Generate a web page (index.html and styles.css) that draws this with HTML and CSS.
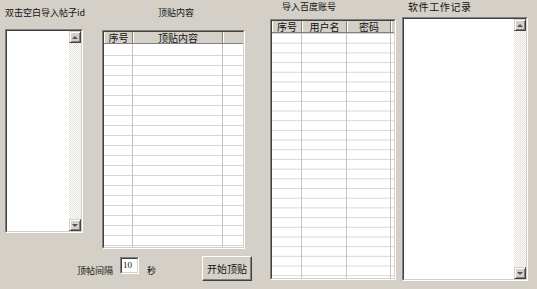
FILE: index.html
```html
<!DOCTYPE html>
<html lang="zh-CN">
<head>
  <meta charset="UTF-8" />
  <title>顶贴工具</title>
  <link rel="stylesheet" href="styles.css">
</head>
<body>

<div class="form">
  <div class="left">
    <div class="left-top">
      <div class="col-ids">
        <div class="cap cap-ids">双击空白导入帖子id</div>
        <div class="sunken ids-box">
          <div class="inner">
            <div class="list-area"></div>
            <div class="vscroll">
              <div class="sb-btn"><span class="arrow-up"></span></div>
              <div class="sb-track"></div>
              <div class="sb-btn"><span class="arrow-down"></span></div>
            </div>
          </div>
        </div>
      </div>

      <div class="col-posts">
        <div class="cap cap-posts">顶贴内容</div>
        <div class="sunken posts-grid">
          <div class="inner grid">
            <div class="grid-head">
              <div class="hc p-no">序号</div>
              <div class="hc p-text">顶贴内容</div>
              <div class="hc p-rest"></div>
            </div>
            <div class="grid-body posts-body">
              <div class="bc p-no"></div>
              <div class="bc p-text"></div>
              <div class="bc p-rest"></div>
            </div>
          </div>
        </div>
      </div>
    </div>

    <div class="controls">
      <span class="ctl-label">顶帖间隔</span>
      <div class="sunken interval"><div class="inner">10</div></div>
      <span class="ctl-unit">秒</span>
      <button class="btn-start">开始顶贴</button>
    </div>
  </div>

  <div class="col-accounts">
    <div class="cap cap-accounts">导入百度账号</div>
    <div class="sunken accounts-grid">
      <div class="inner grid">
        <div class="grid-head">
          <div class="hc a-no">序号</div>
          <div class="hc a-user">用户名</div>
          <div class="hc a-pass">密码</div>
          <div class="hc a-rest"></div>
        </div>
        <div class="grid-body accounts-body">
          <div class="bc a-no"></div>
          <div class="bc a-user"></div>
          <div class="bc a-pass"></div>
          <div class="bc a-rest"></div>
        </div>
      </div>
    </div>
  </div>

  <div class="col-log">
    <div class="cap cap-log">软件工作记录</div>
    <div class="sunken log-box">
      <div class="inner">
        <div class="list-area"></div>
        <div class="vscroll">
          <div class="sb-btn"><span class="arrow-up"></span></div>
          <div class="sb-track"></div>
          <div class="sb-btn"><span class="arrow-down"></span></div>
        </div>
      </div>
    </div>
  </div>
</div>

</body>
</html>
```

FILE: styles.css
```css
body {
  margin: 0;
  background: #d4d0c8;
  font-family: "Noto Sans CJK SC", "DejaVu Sans", sans-serif;
  font-size: 9px;
  color: #111;
}

.form {
  display: flex;
  align-items: flex-start;
  padding-left: 5px;
}

/* ---- captions ---- */
.cap {
  box-sizing: border-box;
  line-height: 12px;
  white-space: nowrap;
}

.cap-ids {
  height: 29px;
  padding-top: 7px;
}

.cap-posts {
  height: 30px;
  padding-top: 7px;
  text-align: center;
  padding-left: 5px;
}

.cap-accounts {
  height: 19px;
  padding-top: 1px;
  padding-left: 12px;
}

.cap-log {
  height: 17px;
  padding-top: 1px;
  padding-left: 6px;
  font-size: 10px;
  line-height: 11px;
  letter-spacing: 0.6px;
}

/* ---- sunken frames ---- */
.sunken {
  box-sizing: border-box;
  border: 1px solid;
  border-color: #808080 #fff #fff #808080;
}

.sunken > .inner {
  box-sizing: border-box;
  height: 100%;
  border: 1px solid;
  border-color: #404040 #d4d0c8 #d4d0c8 #404040;
  background: #fff;
}

/* ---- list boxes with scrollbar ---- */
.ids-box,
.log-box {
  display: flex;
}

.ids-box .inner,
.log-box .inner {
  display: flex;
  width: 100%;
}

.list-area {
  flex: 1;
}

.vscroll {
  width: 12px;
  display: flex;
  flex-direction: column;
}

.sb-track {
  flex: 1;
  background: repeating-conic-gradient(#fff 0 25%, #e2dfd8 0 50%) 0 0 / 2px 2px;
}

.sb-btn {
  box-sizing: border-box;
  height: 12px;
  background: #d4d0c8;
  border: 1px solid;
  border-color: #d4d0c8 #404040 #404040 #d4d0c8;
  box-shadow: inset 1px 1px 0 #fff, inset -1px -1px 0 #808080;
  display: flex;
  align-items: center;
  justify-content: center;
}

.arrow-up {
  width: 0;
  height: 0;
  border-left: 3px solid transparent;
  border-right: 3px solid transparent;
  border-bottom: 3px solid #555;
}

.arrow-down {
  width: 0;
  height: 0;
  border-left: 3px solid transparent;
  border-right: 3px solid transparent;
  border-top: 3px solid #555;
}

/* ---- left group ---- */
.left {
  width: 242px;
}

.left-top {
  display: flex;
  align-items: flex-start;
  gap: 19px;
}

.col-ids {
  width: 78px;
}

.ids-box {
  height: 204px;
}

.col-posts {
  width: 143px;
}

.posts-grid {
  height: 219px;
}

/* ---- grids ---- */
.grid {
  display: flex;
  flex-direction: column;
}

.grid-head {
  display: flex;
  height: 11px;
  background: #d4d0c8;
  border-bottom: 1px solid #808080;
}

.hc {
  box-sizing: border-box;
  height: 11px;
  line-height: 11px;
  font-size: 10px;
  text-align: center;
  white-space: nowrap;
  border-left: 1px solid #fff;
  border-right: 1px solid #808080;
}

.grid-body {
  flex: 1;
  display: flex;
  overflow: hidden;
  background: repeating-linear-gradient(to bottom, transparent 0 9px, #d6d6d6 9px 10px);
}

.posts-body {
  background-position: 0 2px;
}

.accounts-body {
  background-position: 0 1px;
  background-size: 100% 9.7px;
  background-image: repeating-linear-gradient(to bottom, transparent 0 8.7px, #d6d6d6 8.7px 9.7px);
}

.bc {
  box-sizing: border-box;
  border-right: 1px solid #c4c4c4;
}

.p-no { width: 29px; }
.p-text { width: 90px; }
.p-rest { flex: 1; border-right: 0; }

.a-no { width: 30px; }
.a-user { width: 45px; }
.a-pass { width: 44px; }
.a-rest { flex: 1; border-right: 0; }

/* ---- bottom controls ---- */
.controls {
  display: flex;
  align-items: center;
  margin-top: 7px;
  height: 25px;
}

.ctl-label {
  margin-left: 72px;
  margin-top: 3px;
}

.interval {
  width: 19px;
  height: 17px;
  margin-left: 7px;
  margin-top: -6px;
}

.interval .inner {
  font-family: "Liberation Serif", serif;
  font-size: 9px;
  line-height: 12px;
  padding-left: 1px;
}

.ctl-unit {
  margin-left: 8px;
  margin-top: 3px;
}

.btn-start {
  margin-left: auto;
  margin-right: -5px;
  width: 50px;
  height: 25px;
  padding: 0;
  font-family: inherit;
  font-size: 10px;
  color: #111;
  background: #d4d0c8;
  border: 1px solid;
  border-color: #fff #404040 #404040 #fff;
  box-shadow: inset -1px -1px 0 #808080;
}

/* ---- accounts & log ---- */
.col-accounts {
  width: 126px;
  margin-left: 23px;
}

.accounts-grid {
  height: 261px;
}

.col-log {
  width: 126px;
  margin-left: 6px;
}

.log-box {
  height: 264px;
}
```
